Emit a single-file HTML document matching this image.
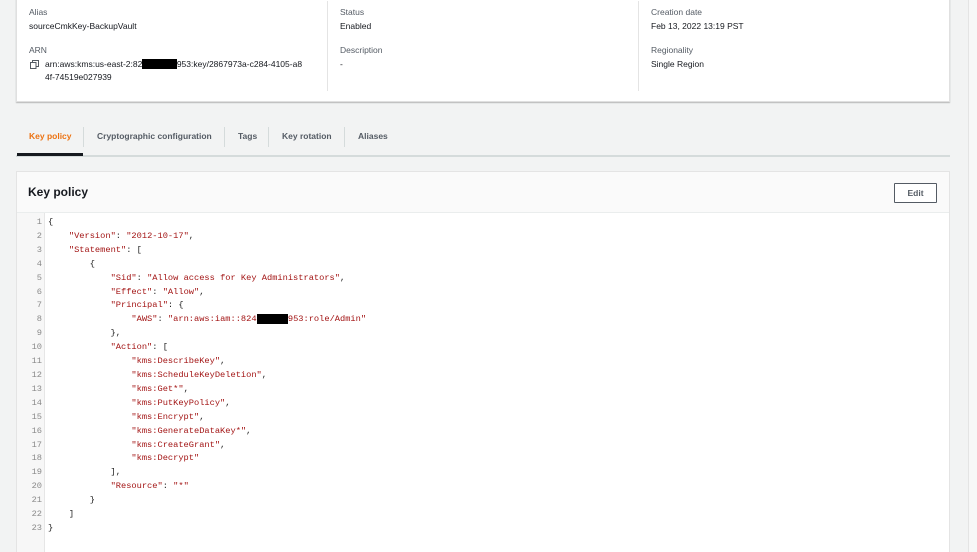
<!DOCTYPE html>
<html style="overflow:hidden;height:552px"><head><style>
*{margin:0;padding:0;box-sizing:border-box}
body{width:977px;height:552px;background:#f2f3f3;font-family:"Liberation Sans",sans-serif;position:relative;overflow:hidden;color:#16191f}
.strip{position:absolute;left:968px;top:0;width:9px;height:552px;background:#f7f7f7;border-left:1px solid #e4e4e4}
.card{position:absolute;left:16px;top:-2px;width:934px;height:104px;background:#fff;box-shadow:0 1px 1px rgba(0,0,0,.25);border:1px solid #e0e0e0}
.lbl{position:absolute;font-size:8.5px;color:#545b64}
.val{position:absolute;font-size:8.5px;color:#16191f}
.vsep{position:absolute;top:2px;width:1px;height:90px;background:#e4e4e4}
.tabs{position:absolute;left:16px;top:124px;width:934px;height:33px;border-bottom:2px solid #d5dbdb}
.tab{position:absolute;top:7px;font-size:8.5px;font-weight:bold;color:#545b64}
.tsep{position:absolute;top:3px;width:1px;height:20px;background:#d5dbdb}
.panel{position:absolute;left:16px;top:171px;width:934px;height:381px;background:#fff;border:1px solid #e4e4e4;border-bottom:none}
.ph{height:41px;background:#fafafa;border-bottom:1px solid #eaeded;position:relative}
.ph h2{position:absolute;left:11px;top:13px;font-size:12px;font-weight:bold;color:#16191f}
.edit{position:absolute;left:877px;top:11px;width:43px;height:20px;border:1px solid #545b64;border-radius:1px;background:#fff;font-size:8.5px;font-weight:bold;color:#545b64;text-align:center;line-height:18px}
.gut{position:absolute;left:0;top:41px;width:28px;height:360px;background:#f7f7f7;border-right:1px solid #e6e6e6}
pre{font-family:"Liberation Mono",monospace;font-size:8.7px;line-height:13.9px}
.nums{position:absolute;left:0;top:44px;width:25px;text-align:right;color:#8a8a8a}
.code{position:absolute;left:31px;top:44px;color:#222}
.s{color:#a31515}
.r{background:#000;color:#000}
</style></head><body>
<div class="strip"></div>
<div class="card">
<div class="lbl" style="left:12px;top:8px">Alias</div>
<div class="val" style="left:12px;top:22px">sourceCmkKey-BackupVault</div>
<div class="lbl" style="left:12px;top:46px">ARN</div>
<svg style="position:absolute;left:13px;top:61px" width="9" height="9" viewBox="0 0 9 9"><rect x="0.5" y="2.5" width="5.5" height="6" fill="none" stroke="#545b64"/><path d="M2.5 2.5V0.5H8.5V6.5H6" fill="none" stroke="#545b64"/></svg>
<div class="val" style="left:28px;top:59px;line-height:13px">arn:aws:kms:us-east-2:82<span class="r">4xxxxxxx</span>953:key/2867973a-c284-4105-a8<br>4f-74519e027939</div>
<div class="vsep" style="left:310px"></div>
<div class="lbl" style="left:323px;top:8px">Status</div>
<div class="val" style="left:323px;top:22px">Enabled</div>
<div class="lbl" style="left:323px;top:46px">Description</div>
<div class="val" style="left:323px;top:60px">-</div>
<div class="vsep" style="left:621px"></div>
<div class="lbl" style="left:634px;top:8px">Creation date</div>
<div class="val" style="left:634px;top:22px">Feb 13, 2022 13:19 PST</div>
<div class="lbl" style="left:634px;top:46px">Regionality</div>
<div class="val" style="left:634px;top:60px">Single Region</div>
</div>
<div class="tabs">
<div class="tab" style="left:13px;color:#ec7211">Key policy</div>
<div style="position:absolute;left:1px;top:29px;width:66px;height:3px;background:#16191f"></div>
<div class="tsep" style="left:67px"></div>
<div class="tab" style="left:81px">Cryptographic configuration</div>
<div class="tsep" style="left:208px"></div>
<div class="tab" style="left:222px">Tags</div>
<div class="tsep" style="left:252px"></div>
<div class="tab" style="left:266px">Key rotation</div>
<div class="tsep" style="left:328px"></div>
<div class="tab" style="left:342px">Aliases</div>
</div>
<div class="panel">
<div class="ph"><h2>Key policy</h2><div class="edit">Edit</div></div>
<div class="gut"></div>
<pre class="nums">1
2
3
4
5
6
7
8
9
10
11
12
13
14
15
16
17
18
19
20
21
22
23</pre>
<pre class="code">{
    <span class="s">"Version"</span>: <span class="s">"2012-10-17"</span>,
    <span class="s">"Statement"</span>: [
        {
            <span class="s">"Sid"</span>: <span class="s">"Allow access for Key Administrators"</span>,
            <span class="s">"Effect"</span>: <span class="s">"Allow"</span>,
            <span class="s">"Principal"</span>: {
                <span class="s">"AWS"</span>: <span class="s">"arn:aws:iam::824<span class="r">xxxxxx</span>953:role/Admin"</span>
            },
            <span class="s">"Action"</span>: [
                <span class="s">"kms:DescribeKey"</span>,
                <span class="s">"kms:ScheduleKeyDeletion"</span>,
                <span class="s">"kms:Get*"</span>,
                <span class="s">"kms:PutKeyPolicy"</span>,
                <span class="s">"kms:Encrypt"</span>,
                <span class="s">"kms:GenerateDataKey*"</span>,
                <span class="s">"kms:CreateGrant"</span>,
                <span class="s">"kms:Decrypt"</span>
            ],
            <span class="s">"Resource"</span>: <span class="s">"*"</span>
        }
    ]
}</pre>
</div>
</body></html>
